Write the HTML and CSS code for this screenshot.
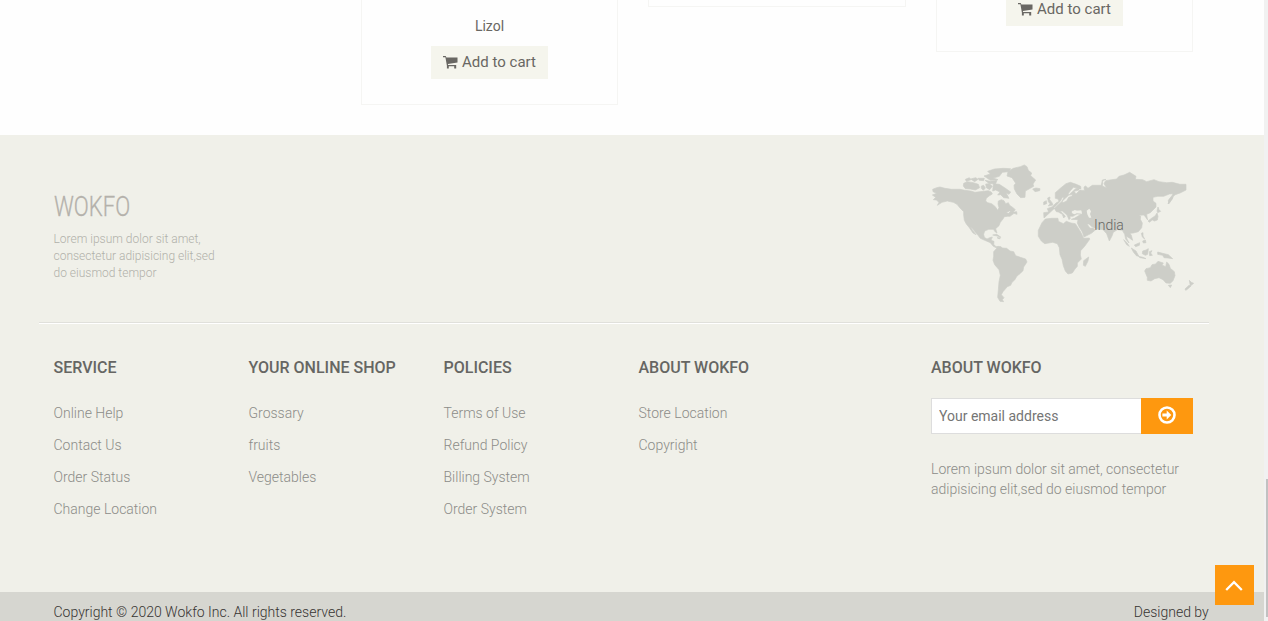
FILE: index.html
```html
<!DOCTYPE html>
<html lang="en">
<head>
<meta charset="utf-8">
<title>Wokfo</title>
<link rel="stylesheet" href="styles.css">
</head>
<body>
<svg class="defs" width="0" height="0" aria-hidden="true">
  <symbol id="cart" viewBox="0 0 15 13"><path d="M0 0H2.700L3.400 1.500H14.500V6.600L4.900 8.100 5.100 9H13.200V10.200H4L2.400 1.200H0zM3.900 10H5.800V12.500H3.900zM11.200 10H13.200V12.500H11.200z"/></symbol>
</svg>
<main class="products">
  <article class="card card-a">
    <p class="name">Lizol</p>
    <a class="cart-btn"><svg class="cart-icon"><use href="#cart"/></svg>Add to cart</a>
  </article>
  <article class="card card-b"></article>
  <article class="card card-c">
    <a class="cart-btn"><svg class="cart-icon"><use href="#cart"/></svg>Add to cart</a>
  </article>
</main>
<footer class="footer">
  <section class="top">
    <div class="brand">
      <h2 class="logo">WOKFO</h2>
      <p class="tagline">Lorem ipsum dolor sit amet,<br>consectetur adipisicing elit,sed<br>do eiusmod tempor</p>
    </div>
    <div class="address">
      <svg class="map" viewBox="0 0 840 465" aria-hidden="true">
        <!-- North America -->
        <path d="M38 103L50 98 60 96 75 100 95 103 120 103 135 106 152 108 165 112 190 109 205 107 214 111 217 117 207 123 199 130 197 138 203 143 215 146 226 155 233 166 237 158 234 147 235 138 244 134 252 137 257 146 265 143 269 151 279 158 286 164 280 170 268 168 258 173 266 175 273 168 281 171 290 170 291 178 282 175 270 184 263 184 253 185 249 192 241 202 237 212 227 221 231 234 226 231 220 223 206 223 194 228 191 238 193 247 201 252 209 248 217 246 213 256 222 259 221 268 228 275 237 274 232 280 220 274 211 263 199 258 181 250 174 241 166 232 158 221 151 215 159 227 168 239 159 234 148 218 139 207 133 196 131 180 131 170 120 159 111 148 100 142 82 138 66 142 52 151 57 142 49 135 40 134 47 127 37 120 50 115 39 110z"/>
        <path d="M131 85L142 80 160 83 175 88 179 98 166 105 151 102 136 101 130 93zM136 73L148 68 153 74 139 79zM152 72L167 68 174 73 164 80zM174 70L193 70 191 77 178 76zM184 93L191 91 196 99 190 106 184 100zM197 87L208 86 217 94 209 104 199 98zM195 76L211 79 231 76 227 86 208 86zM192 63L211 57 203 49 223 42 250 40 272 41 267 50 247 52 238 64 220 69 234 74 211 76zM220 86L238 88 255 99 272 111 267 118 258 113 267 130 251 128 242 119 233 120 240 111 227 105 218 108z"/>
        <!-- Greenland and Iceland -->
        <path d="M264 50L280 40 301 35 313 30 321 35 325 46 335 54 332 62 347 75 339 87 341 94 327 102 316 108 315 127 302 128 291 117 283 102 282 91 287 85 276 68 261 63zM338 102L348 99 360 101 359 107 345 110z"/>
        <!-- Caribbean -->
        <path d="M218 240L230 238 242 246 231 243zM231 248L242 248 238 252z"/>
        <!-- South America -->
        <path d="M230 280L240 274 248 279 260 280 270 288 281 290 287 302 301 307 317 312 321 321 311 336 309 347 300 356 291 363 284 375 276 382 272 391 262 395 256 402 249 410 244 419 252 428 247 434 251 440 240 439 233 427 235 405 237 380 241 361 237 344 224 329 219 316 221 304 221 290z"/>
        <!-- Europe and Asia -->
        <path d="M372 189L371 173 386 171 382 161 397 155 408 144 417 139 414 132 406 130 406 113 422 99 438 86 451 82 469 88 482 94 483 101 467 98 460 97 451 107 444 117 449 120 457 118 456 124 446 127 440 138 429 143 426 138 432 128 428 126 421 138 415 145 402 158 409 170 415 171 427 178 431 189 436 184 426 173 419 168 427 168 441 180 447 194 451 190 449 184 459 184 465 180 471 177 484 178 481 169 470 169 463 178 456 176 455 167 466 166 484 165 486 177 478 181 463 190 454 193 474 194 472 204 477 215 487 231 492 246 514 235 526 225 519 219 510 220 501 207 507 207 516 215 530 222 549 224 560 236 568 258 576 243 580 232 592 224 607 226 614 238 617 252 627 264 621 252 618 243 628 249 638 256 634 241 630 235 640 234 655 230 665 218 667 204 661 193 662 184 656 181 672 180 678 188 683 195 681 186 680 178 691 173 708 156 708 145 699 138 699 127 713 124 731 124 748 117 759 116 759 127 744 147 749 132 766 119 780 114 798 105 798 88 780 88 757 82 740 83 717 80 702 74 680 80 668 74 646 73 648 64 629 52 612 60 597 64 590 72 570 75 557 77 552 86 560 99 547 93 548 77 558 73 547 75 544 91 517 91 504 100 497 93 492 96 493 107 480 105 468 117 462 109 477 105 477 99 467 101z"/>
        <path class="water" d="M455 172L464 165 471 168 484 167 486 176 470 175 464 178zM500 167L508 161 513 169 510 177 514 188 507 188 502 178z"/>
        <!-- British Isles -->
        <path d="M383 129L390 126 389 134 396 143 399 150 385 153 390 146 385 140zM371 141L379 137 380 146 371 149z"/>
        <!-- Africa -->
        <path d="M376 192L394 190 414 190 415 199 430 206 439 199 453 204 466 206 472 215 482 231 491 250 508 249 509 253 494 274 482 287 481 300 484 312 472 324 472 334 465 342 457 354 444 357 436 348 430 332 426 313 420 299 418 278 412 266 398 262 374 266 364 258 355 244 355 226 366 203zM506 306L504 318 496 334 490 331 491 317z"/>
        <!-- Kamchatka and Islands -->
        <path d="M759 118L757 132 746 147 745 136zM684 198L697 188 705 183 711 174 714 184 712 195 703 198 697 195 688 202zM711 168L714 156 717 164 722 169 713 173zM664 235L669 233 669 243 674 252 667 246zM668 258L676 255 678 263 670 264zM611 254L621 263 628 274 620 269zM634 279L648 288 656 303 650 303 640 291zM655 304L669 307 678 311 660 308zM668 288L678 285 685 281 683 298 676 301 667 296zM643 270L659 263 658 271 647 275zM688 290L696 287 692 294 697 301 689 302zM713 291L728 295 745 299 758 311 744 309 732 308 728 301 713 298z"/>
        <!-- Australia and New Zealand -->
        <path d="M674 348L678 341 691 338 696 329 707 327 714 319 730 324 726 330 737 335 740 321 747 328 751 340 763 350 765 362 759 377 751 385 738 384 729 374 717 368 704 371 693 378 682 376 682 367zM745 391L755 390 751 398zM808 376L814 382 821 385 811 393zM807 391L813 393 802 403 797 406 795 402z"/>
      </svg>
      <p class="place">India</p>
    </div>
  </section>
  <section class="widgets">
    <div class="widget"><h2>Service</h2><ul><li>Online Help</li><li>Contact Us</li><li>Order Status</li><li>Change Location</li></ul></div>
    <div class="widget"><h2>Your Online Shop</h2><ul><li>Grossary</li><li>fruits</li><li>Vegetables</li></ul></div>
    <div class="widget"><h2>Policies</h2><ul><li>Terms of Use</li><li>Refund Policy</li><li>Billing System</li><li>Order System</li></ul></div>
    <div class="widget"><h2>About Wokfo</h2><ul><li>Store Location</li><li>Copyright</li></ul></div>
    <div class="subscribe">
      <h2>About Wokfo</h2>
      <form class="form">
        <input class="email" type="text" placeholder="Your email address">
        <button class="send" type="button" aria-label="Subscribe"><svg class="send-icon" viewBox="0 0 18 18"><circle cx="9" cy="9" r="7.500"/><path d="M4.400 7.600H8.700V4.500L13.300 9 8.700 13.500V10.400H4.400z"/></svg></button>
      </form>
      <p>Lorem ipsum dolor sit amet, consectetur adipisicing elit,sed do eiusmod tempor</p>
    </div>
  </section>
  <section class="bottom"><p>Copyright © 2020 Wokfo Inc. All rights reserved.</p><p>Designed by</p></section>
</footer>
<a class="to-top"><svg class="chevron" viewBox="0 0 18 12"><path d="M1.200 10L9 2.200 16.800 10"/></svg></a>
<div class="scrollbar"><div class="thumb"></div></div>
</body>
</html>
```
FILE: styles.css
```css
* { box-sizing: border-box; }
body { margin: 0; width: 1268px; height: 621px; overflow: hidden; position: relative; background: #fefefe; font-family: Roboto, sans-serif; font-size: 14px; line-height: 20px; color: #696763; }
h2, p, ul { margin: 0; padding: 0; }
li { list-style: none; }
.defs { position: absolute; }
.products { height: 135px; padding-left: 361px; display: grid; grid-template-columns: 257px 258px 257px; column-gap: 30px; align-items: start; }
.card { border: 1px solid #f5f5f3; border-top: 0; text-align: center; display: flex; flex-direction: column; align-items: center; }
.card-a { height: 105px; padding-top: 16px; }
.card-b { height: 7px; }
.card-c { height: 52px; justify-content: flex-end; padding-bottom: 25px; }
.name { margin-bottom: 10px; }
.cart-btn { width: 117px; height: 33px; flex: none; background: #f5f5ed; font-size: 15px; line-height: 32px; display: flex; justify-content: center; }
.cart-icon { width: 15px; height: 13px; margin: 10px 4px 0 0; fill: #696763; }
.footer { width: 1264px; height: 486px; background: #f0f0e9; }
.top { height: 189px; margin: 0 55px 0 39px; padding-left: 14.500px; display: flex; justify-content: space-between; border-bottom: 1px solid #fff; box-shadow: inset 0 -1px #e0e0db; }
.brand { padding-top: 56px; }
.logo { font-size: 28px; line-height: 32px; font-weight: 300; color: #b4b1ab; -webkit-text-stroke: .3px #b4b1ab; transform: scaleX(.79); transform-origin: left; }
.tagline { margin-top: 8px; font-size: 12px; line-height: 17px; font-weight: 300; color: #b0b0aa; }
.address { width: 280px; height: 155px; margin: 20px 9px 0 0; position: relative; }
.map { display: block; width: 280px; height: 155px; fill: #cdcec8; stroke: #cdcec8; stroke-width: 2; stroke-linejoin: round; }
.map .water { fill: #f0f0e9; stroke: none; }
.place { position: absolute; left: 174px; top: 60px; font-weight: 300; color: #666663; }
.widgets { height: 268px; padding: 34px 0 0 53.500px; display: flex; font-weight: 300; color: #8c8c88; }
.widget { width: 195px; }
.widget:nth-child(4) { width: 292.500px; }
.widgets h2 { font-size: 16px; line-height: 20px; font-weight: 500; text-transform: uppercase; color: #666663; white-space: nowrap; }
.widget ul { margin-top: 25px; display: grid; gap: 12px; }
.subscribe { width: 262px; }
.form { display: flex; margin: 20px 0 25px; }
.email { width: 210px; height: 36px; border: 1px solid #ddd; border-right: 0; padding: 0 7px; background: #fff; font: 400 14px Roboto, sans-serif; outline: none; }
.email::placeholder { color: #757575; opacity: 1; }
.send { width: 52px; height: 36px; padding: 8px 0 0; border: 0; background: #fe980f; display: flex; justify-content: center; }
.send-icon { width: 18px; height: 18px; fill: #fff; }
.send-icon circle { fill: none; stroke: #fff; stroke-width: 2.600; }
.bottom { height: 29px; padding: 10px 55.300px 0 53.500px; display: flex; justify-content: space-between; background: #d6d6d0; font-weight: 300; color: #363432; }
.to-top { position: absolute; left: 1215px; top: 565px; width: 39px; height: 40px; background: #fe980f; display: flex; justify-content: center; align-items: center; }
.chevron { width: 18px; height: 12px; margin: 2px 1px 0 0; fill: none; stroke: #fff; stroke-width: 2.300; }
.scrollbar { position: absolute; right: 0; top: 0; width: 4px; height: 621px; padding: 479px 0 4px 2px; background: #f1f1f1; }
.thumb { height: 138px; background: #c1c1c1; }
```
